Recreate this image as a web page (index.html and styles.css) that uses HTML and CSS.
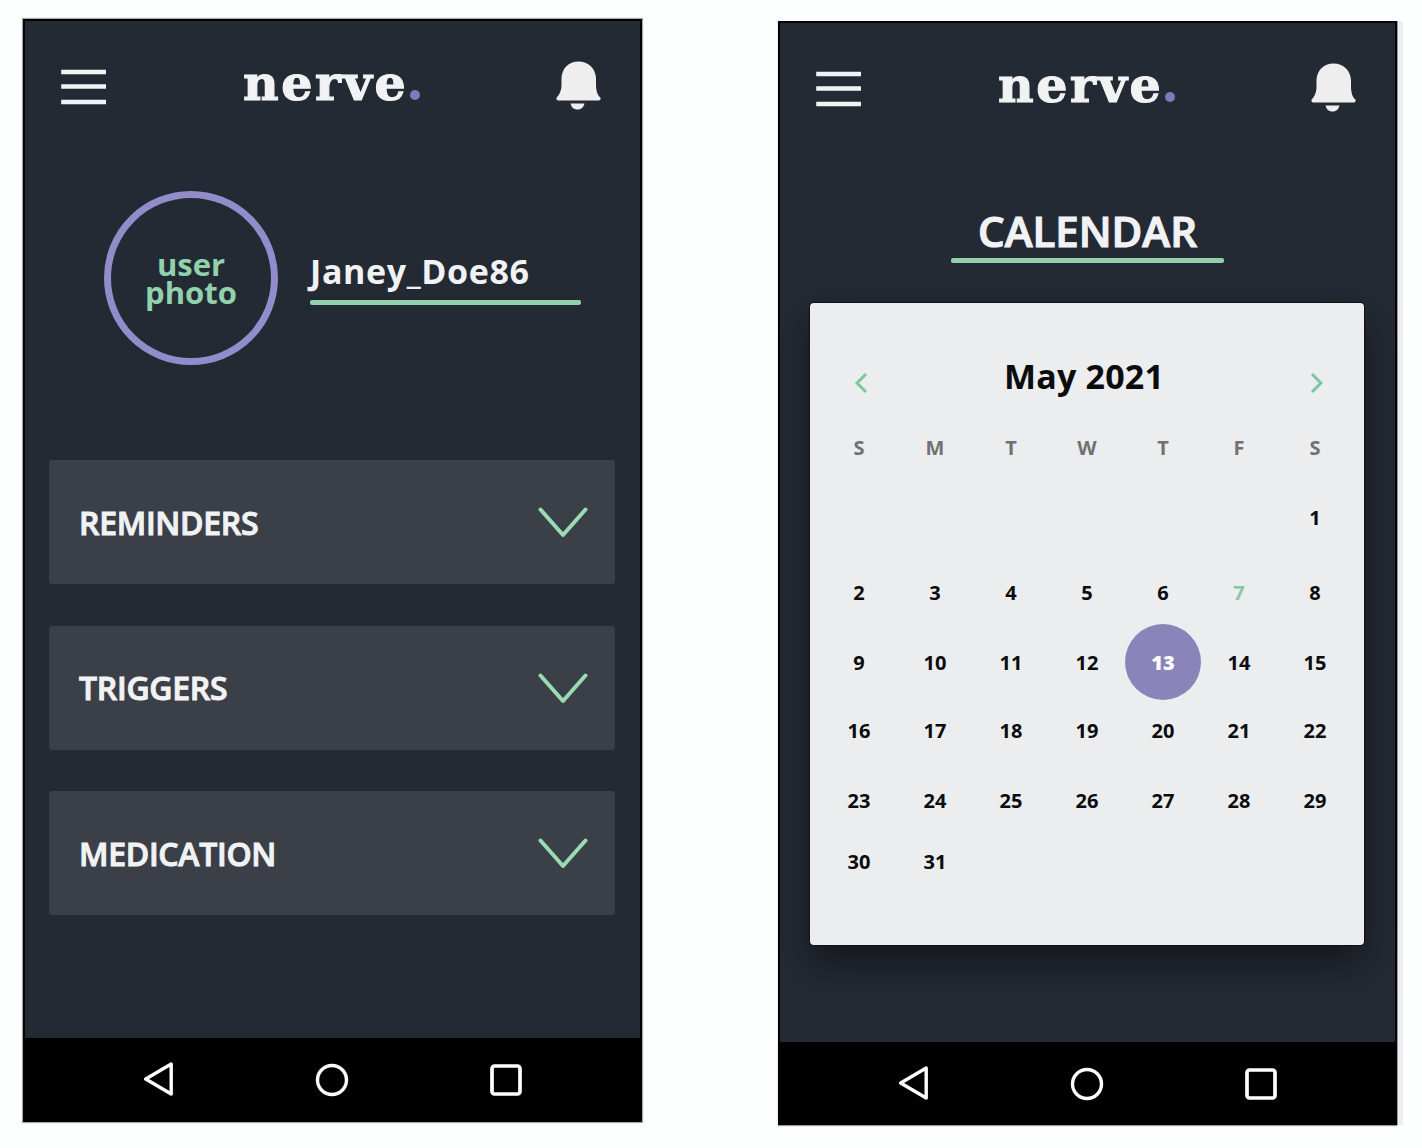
FILE: index.html
```html
<!DOCTYPE html>
<html lang="en">
<head>
<meta charset="utf-8">
<title>nerve.</title>
<link rel="stylesheet" href="styles.css">
</head>
<body>
<svg width="0" height="0" class="sprite" aria-hidden="true">
  <symbol id="menu" viewBox="0 0 46 36"><path d="M1.200 3H46M1.200 17.500H46M1.200 33H46" stroke="#f1f2f4" stroke-width="4.300" stroke-linecap="butt"/></symbol>
  <symbol id="bell" viewBox="0 0 46 50"><path d="M22.500 0.500C12.500 0.500 6 7.500 5.500 17V25C5 31 3 34 0.700 36.500C0 38 0.500 39.500 2.500 39.500H42.500C44.500 39.500 45.200 38 44.300 36.500C41.500 34 40.500 31 40 25V17C39.500 7.500 32.500 0.500 22.500 0.500ZM14.500 42.500H28.500C27.500 47 24.500 48.500 21.500 48.500S15.500 47 14.500 42.500Z" fill="#eeeeef"/></symbol>
  <symbol id="down" viewBox="0 0 50 32"><path d="M2.500 3.500L25 29L47.500 3.500" fill="none" stroke="#9adbb3" stroke-width="4" stroke-linecap="round" stroke-linejoin="round"/></symbol>
  <symbol id="back" viewBox="0 0 30 36"><path d="M28.200 2V32L2.700 17Z" fill="none" stroke="#fff" stroke-width="3.400" stroke-linejoin="round"/></symbol>
  <symbol id="home" viewBox="0 0 34 34"><circle cx="17" cy="17" r="14.500" fill="none" stroke="#fff" stroke-width="3.400"/></symbol>
  <symbol id="recent" viewBox="0 0 32 32"><rect x="2" y="2" width="28" height="28" rx="2.500" fill="none" stroke="#fff" stroke-width="3.700"/></symbol>
</svg>
<main class="screens">
  <section class="phone">
    <header class="topbar">
      <svg class="menu"><use href="#menu"/></svg>
      <div class="logo">nerve<span class="dot"></span></div>
      <svg class="bell"><use href="#bell"/></svg>
    </header>
    <div class="profile">
      <div class="avatar">user<br>photo</div>
      <div class="name">Janey_Doe86</div>
    </div>
    <div class="list">
      <div class="item"><span>REMINDERS</span><svg class="down"><use href="#down"/></svg></div>
      <div class="item"><span>TRIGGERS</span><svg class="down"><use href="#down"/></svg></div>
      <div class="item"><span>MEDICATION</span><svg class="down"><use href="#down"/></svg></div>
    </div>
    <nav class="navbar">
      <svg class="back"><use href="#back"/></svg>
      <svg class="home"><use href="#home"/></svg>
      <svg class="recent"><use href="#recent"/></svg>
    </nav>
  </section>
  <section class="phone phone-calendar">
    <header class="topbar">
      <svg class="menu"><use href="#menu"/></svg>
      <div class="logo">nerve<span class="dot"></span></div>
      <svg class="bell"><use href="#bell"/></svg>
    </header>
    <h1 class="title"><span>CALENDAR</span></h1>
    <div class="calendar">
      <div class="month">
        <svg class="arrow" viewBox="0 0 14 22"><path d="M12 2L3 11L12 20" fill="none" stroke="#7cc6a0" stroke-width="3"/></svg>
        <h2 class="month-name">May 2021</h2>
        <svg class="arrow" viewBox="0 0 14 22"><path d="M3 2L12 11L3 20" fill="none" stroke="#7cc6a0" stroke-width="3"/></svg>
      </div>
      <div class="days">
        <span class="wd">S</span><span class="wd">M</span><span class="wd">T</span><span class="wd">W</span><span class="wd">T</span><span class="wd">F</span><span class="wd">S</span>
        <span class="first">1</span>
        <span>2</span><span>3</span><span>4</span><span>5</span><span>6</span><span class="today">7</span><span>8</span>
        <span>9</span><span>10</span><span>11</span><span>12</span><span><b class="selected">13</b></span><span>14</span><span>15</span>
        <span>16</span><span>17</span><span>18</span><span>19</span><span>20</span><span>21</span><span>22</span>
        <span>23</span><span>24</span><span>25</span><span>26</span><span>27</span><span>28</span><span>29</span>
        <span>30</span><span>31</span>
      </div>
    </div>
    <nav class="navbar">
      <svg class="back"><use href="#back"/></svg>
      <svg class="home"><use href="#home"/></svg>
      <svg class="recent"><use href="#recent"/></svg>
    </nav>
  </section>
</main>
</body>
</html>
```
FILE: styles.css
```css
* { box-sizing: border-box; }
body {
  margin: 0;
  background: #fdfefe;
  font-family: "Open Sans", "Noto Sans", sans-serif;
  color: #f1f2f4;
}
svg { display: block; flex: none; }
.sprite { position: absolute; }
.screens {
  display: flex;
  align-items: flex-start;
  gap: 136px;
  height: 1148px;
  padding: 19px 0 0 23px;
}
.phone {
  display: flex;
  flex-direction: column;
  flex: none;
  width: 619px;
  height: 1103px;
  overflow: hidden;
  background: #242a34;
  border: 2px solid #020306;
  border-bottom: 0;
  box-shadow: 0 0 1px 1px #aaabad;
}
.phone-calendar {
  height: 1104px;
  margin-top: 2px;
  box-shadow: 0 1px 1px #999, 1px 0 0 #999, 6px 0 0 #ededef;
}
.topbar {
  display: flex;
  align-items: flex-start;
  height: 90px;
  padding: 40px 38px 0 35px;
}
.menu { width: 46px; height: 36px; margin: 8px 0 0 0; }
.logo {
  display: flex;
  align-items: baseline;
  margin: -8px auto 0 137px;
  font: bold 49px/60px "DejaVu Serif", serif;
  letter-spacing: 2.6px;
  -webkit-text-stroke: 1.2px #f1f2f4;
}
.dot { width: 10px; height: 10px; margin-left: 2px; border-radius: 50%; background: #7f7abb; }
.bell { width: 46px; height: 50px; }
.profile {
  display: flex;
  gap: 32px;
  margin: 80px 0 0 79px;
}
.avatar {
  flex: none;
  width: 174px;
  height: 174px;
  padding-top: 52px;
  border: 7px solid #928ccb;
  border-radius: 50%;
  color: #91d1ad;
  font-size: 31px;
  font-weight: 700;
  line-height: 28px;
  text-align: center;
}
.name {
  width: 271px;
  height: 63px;
  margin-top: 51px;
}
.name::after, .title::after {
  content: "";
  display: block;
  height: 5px;
  border-radius: 2px;
  background: #92d0ad;
}
.name {
  font-size: 34px;
  font-weight: 700;
  line-height: 58px;
  letter-spacing: .62px;
}
.list {
  display: grid;
  grid-template-rows: repeat(3, 124px);
  gap: 41.500px;
  width: 566px;
  margin: 95px 0 0 24px;
}
.item {
  display: flex;
  justify-content: space-between;
  align-items: center;
  padding: 0 27px 0 30px;
  border-radius: 3px;
  background: #3b3f47;
  font-size: 32px;
  font-weight: 600;
  letter-spacing: -.3px;
  -webkit-text-stroke: 1px #f1f2f4;
}
.down { width: 50px; height: 32px; }
.navbar {
  display: flex;
  align-items: center;
  height: 84px;
  margin: auto -2px 0;
  padding-left: 120px;
  background: #000;
}
.back { width: 30px; height: 36px; }
.home { width: 34px; height: 34px; margin-left: 142px; }
.recent { width: 32px; height: 32px; margin-left: 141px; }
.title {
  width: 273px;
  height: 62px;
  margin: 88px auto 0 171px;
  font-size: 42px;
  font-weight: 600;
  line-height: 60px;
  text-align: center;
  -webkit-text-stroke: 1.2px #f1f2f4;
}
.title span { display: block; height: 57px; }
.phone-calendar .navbar { height: 83px; }
.calendar {
  width: 554px;
  height: 642px;
  margin: 40px 0 0 30px;
  padding: 0 11px;
  border-radius: 4px;
  background: #ecedee;
  box-shadow: 0 0 1px 1px #101318, 0 18px 36px rgba(14, 16, 18, .7);
  color: #0b0c0d;
}
.month {
  display: flex;
  justify-content: space-between;
  align-items: flex-start;
  height: 109px;
  padding: 49px 30px 0 33px;
}
.month-name {
  margin: 0 9px 0 0;
  font-size: 34px;
  font-weight: 700;
  line-height: 48px;
  letter-spacing: .2px;
}
.arrow { width: 14px; height: 22px; margin-top: 20px; }
.days {
  display: grid;
  grid-template-columns: repeat(7, 76px);
  grid-template-rows: 70px 70px 80px 60px 76px 64px 58px;
  font-size: 20px;
  font-weight: 700;
}
.days > span { display: flex; align-items: center; justify-content: center; }
.days .wd { color: #707274; }
.days .first { grid-column: 7; }
.days .today { color: #86c8a5; }
.selected {
  display: grid;
  place-items: center;
  flex: none;
  width: 76px;
  height: 76px;
  margin: -8px 0;
  border-radius: 50%;
  background: #8a84ba;
  color: #fff;
}
```
